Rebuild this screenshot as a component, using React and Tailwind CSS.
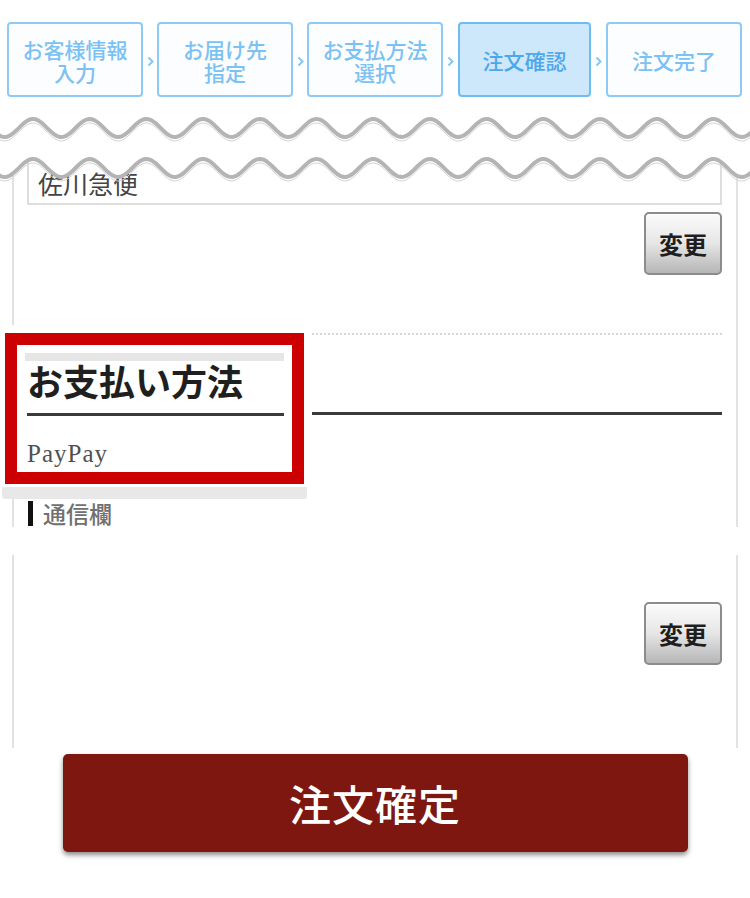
import React from "react"

const steps = [
  { lines: ["お客様情報", "入力"], box: "w-[136px]", gap: "w-[14px]" },
  { lines: ["お届け先", "指定"], box: "w-[136px]", gap: "w-[14px]" },
  { lines: ["お支払方法", "選択"], box: "w-[136px]", gap: "w-[15px]" },
  { lines: ["注文確認"], box: "w-[133px]", gap: "w-[15px]", active: true },
  { lines: ["注文完了"], box: "w-[136px]" },
]

const jp = "font-['Noto_Sans_CJK_JP',sans-serif]"
const serif = "font-['Liberation_Serif','Noto_Sans_CJK_JP',serif]"

// sine wave along the width, crests at x = 33 + k*56.7
function wave(mid, amp) {
  let d = ""
  for (let x = -4; x <= 756; x += 2) {
    const y = mid - amp * Math.cos((2 * Math.PI * (x - 33)) / 56.7)
    d += (x === -4 ? "M" : "L") + x + "," + y.toFixed(2) + " "
  }
  return d
}

function Chevron() {
  return (
    <svg width="7" height="11" viewBox="0 0 7 11" className="mt-[4px]">
      <polyline points="1.5,1.5 5.5,5.5 1.5,9.5" fill="none" stroke="#86c6f4" strokeWidth="2" />
    </svg>
  )
}

function ChangeButton() {
  return (
    <button
      className={`w-[78px] h-[63px] rounded-[5px] border-2 border-[#8c8c8c] bg-gradient-to-b from-[#fbfbfb] via-[#e6e6e6] to-[#b6b6b6] shadow-[inset_0_1px_0_#fff] flex items-center justify-center ${jp} text-[24px] font-bold text-[#1e1e1e] leading-none`}
    >
      変更
    </button>
  )
}

export default function App() {
  const w1 = wave(31, 9)
  const w2 = wave(71, 9)
  const cover = wave(71, 9).replace(/^M/, "L")

  return (
    <div className="w-[750px] h-[898px] bg-white overflow-hidden">
      {/* steps */}
      <div className="flex items-center pt-[22px] pl-[7px]">
        {steps.map((s, i) => (
          <React.Fragment key={i}>
            <div
              className={`${s.box} h-[75px] rounded-[4px] border-2 flex flex-col items-center justify-center pt-[2px] ${jp} text-[21px] font-medium leading-[23px] ${
                s.active
                  ? "bg-[#cde7fb] border-[#6fbcf2] text-[#4da7ea]"
                  : "bg-[#fbfdff] border-[#8dcbf6] text-[#7cc1f3]"
              }`}
            >
              {s.lines.map((l) => (
                <span key={l} className="block h-[23px]">{l}</span>
              ))}
            </div>
            {s.gap && (
              <div className={`${s.gap} flex justify-center`}>
                <Chevron />
              </div>
            )}
          </React.Fragment>
        ))}
      </div>

      {/* torn-off waves */}
      <svg width="750" height="93" viewBox="0 0 750 93" className="relative z-10 block">
        <path d={"M-4,0 L756,0 " + cover.split(" ").reverse().join(" ").replace(/^ /, "") + " Z"} fill="#fff" />
        <path d={w1} transform="translate(0,4)" fill="none" stroke="#d4d4d4" strokeWidth="1" />
        <path d={w1} fill="none" stroke="#b4b4b4" strokeWidth="4" />
        <path d={w2} transform="translate(0,4)" fill="none" stroke="#d4d4d4" strokeWidth="1" />
        <path d={w2} fill="none" stroke="#b4b4b4" strokeWidth="4" />
      </svg>

      {/* upper part */}
      <div className="-mt-[30px] ml-[12px] w-[726px] border-r-2 border-[#e2e2e2]">
        <div className="h-[165px] border-l-2 border-[#e2e2e2] flex flex-col">
          <div className="ml-[13px] mr-[14px] h-[45px] border-2 border-t-0 border-[#dedede] flex items-end pl-[9px] pb-[7px]">
            <span className={`${jp} text-[25px] leading-[25px] text-[#444]`}>佐川急便</span>
          </div>
          <div className="mt-[7px] mr-[14px] flex justify-end">
            <ChangeButton />
          </div>
        </div>

        {/* payment method (highlighted) */}
        <div className="pt-[8px] flex">
          <div className="-ml-[7px] w-[299px] h-[151px] border-[12px] border-[#cc0000] bg-white px-[8px] pt-[8px]">
            <div className="h-[8px] bg-[#e6e6e6]" />
            <div className={`${serif} text-[36px] font-bold leading-[44px] text-[#1f1f1f] pl-[2px] mt-[1px]`}>
              お支払い方法
            </div>
            <div className="mt-[7px] ml-[2px] h-[3px] bg-[#3a3a3a]" />
            <div className={`${serif} text-[25px] leading-[30px] tracking-[1px] text-[#505050] pl-[2px] mt-[23px]`}>
              PayPay
            </div>
          </div>
          <div className="flex-1 ml-[8px] mr-[14px]">
            <div className="border-t-2 border-dotted border-[#d6d6d6]" />
            <div className="mt-[77px] h-[3px] bg-[#3a3a3a]" />
          </div>
        </div>
        <div className="-ml-[10px] mt-[3px] w-[305px] h-[12px] rounded-b-[3px] bg-[#e8e8e8]" />
        <div className="h-[28px] border-l-2 border-[#e2e2e2] flex items-center pl-[14px]">
          <span className="w-[5px] h-[25px] bg-[#111]" />
          <span className={`${jp} ml-[10px] text-[23px] leading-[25px] font-medium text-[#707070]`}>通信欄</span>
        </div>
      </div>

      {/* lower part */}
      <div className="mt-[28px] ml-[12px] w-[726px] h-[193px] border-x-2 border-[#e2e2e2] pt-[47px] pr-[14px] flex justify-end items-start">
        <ChangeButton />
      </div>

      {/* confirm */}
      <div className="mt-[6px] flex justify-center">
        <button
          className={`w-[625px] h-[98px] rounded-[5px] bg-[#7e1710] shadow-[0_3px_5px_rgba(0,0,0,0.45)] flex items-center justify-center ${jp} text-[42px] font-medium text-white leading-none tracking-[1px]`}
        >
          注文確定
        </button>
      </div>
    </div>
  )
}
